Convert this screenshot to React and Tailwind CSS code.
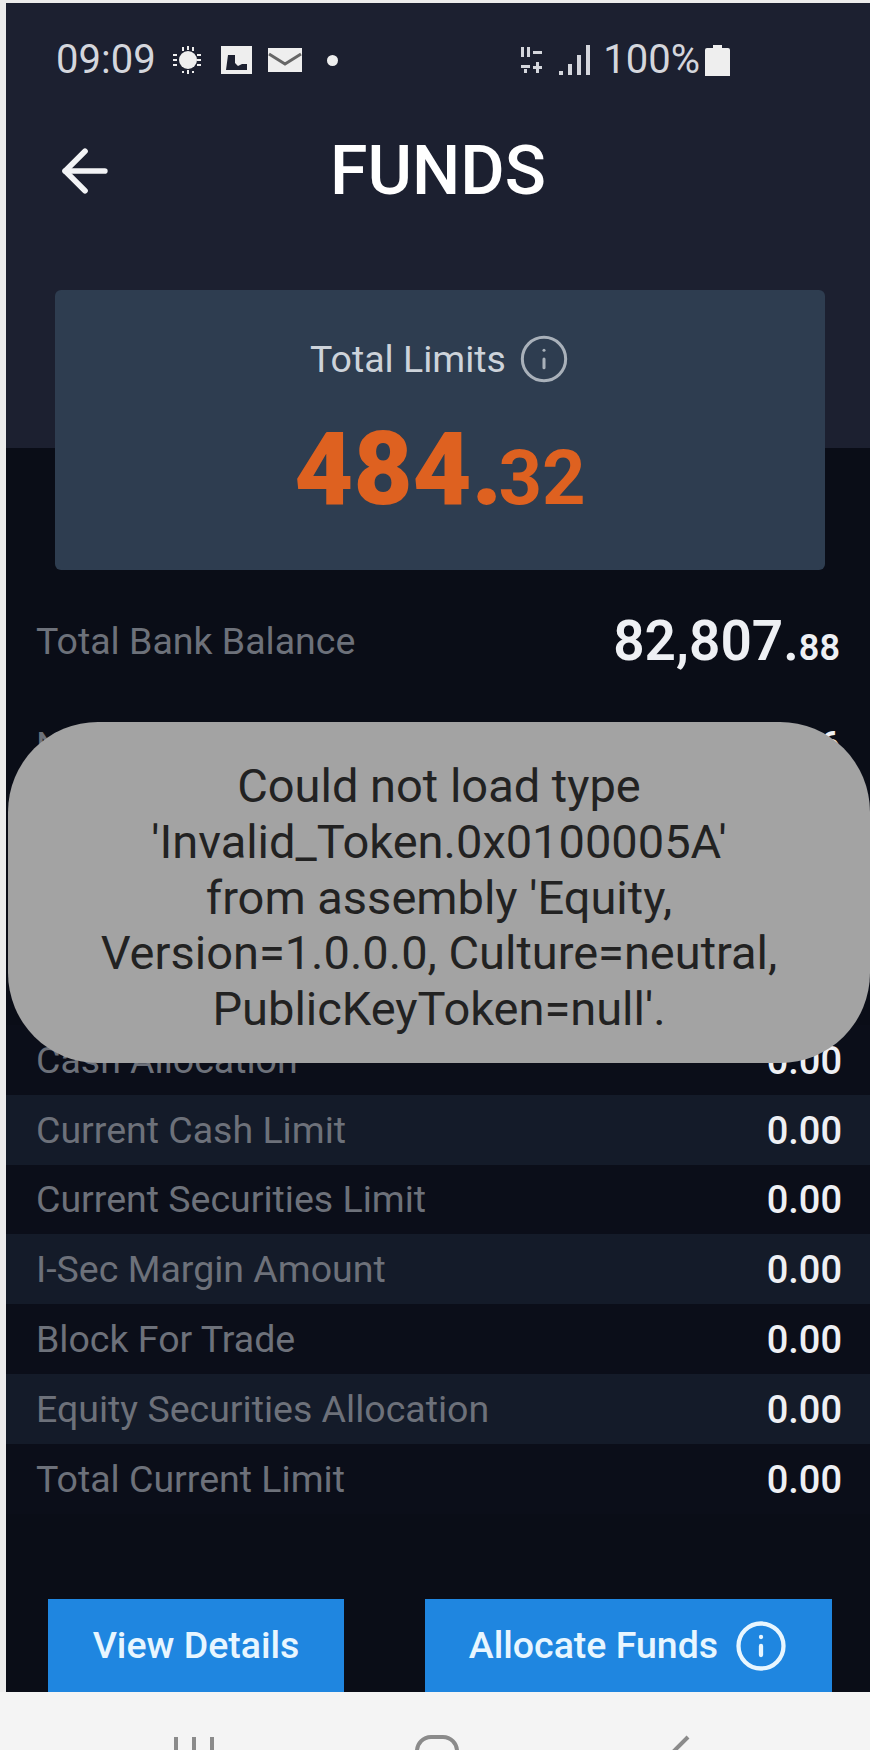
import React from 'react';
import { ArrowLeft, Info } from 'lucide-react';

const rows = [
  { label: 'Cash Allocation', value: '0.00', dark: true },
  { label: 'Current Cash Limit', value: '0.00', dark: false },
  { label: 'Current Securities Limit', value: '0.00', dark: true },
  { label: 'I-Sec Margin Amount', value: '0.00', dark: false },
  { label: 'Block For Trade', value: '0.00', dark: true },
  { label: 'Equity Securities Allocation', value: '0.00', dark: false },
  { label: 'Total Current Limit', value: '0.00', dark: true },
];

function StatusBar() {
  return (
    <div className="flex h-[60px] items-center justify-between pl-[50px] pr-[140px] text-[40px] leading-none text-[#d4d6dc]">
      <div className="flex items-center">
        <span>09:09</span>
        <svg className="ml-[16px]" width="32" height="28" viewBox="0 0 32 28" fill="#eee">
          <circle cx="16" cy="14" r="9" />
          <path d="M1 9h30M1 14h30M1 19h30M11 1v26M16 0v28M21 1v26" stroke="#eee" strokeWidth="2" strokeDasharray="4 20" />
        </svg>
        <svg className="ml-[17px]" width="31" height="28" viewBox="0 0 31 28">
          <rect width="31" height="28" fill="#eee" />
          <path d="M5 24h21v-6h-5l-4 2-3-3v-8H7z" fill="#1c2030" />
        </svg>
        <svg className="ml-[16px]" width="34" height="24" viewBox="0 0 34 24">
          <rect width="34" height="24" fill="#eee" />
          <path d="M1 6l16 10L33 6" stroke="#666" strokeWidth="3" fill="none" />
        </svg>
        <span className="ml-[25px] h-[11px] w-[11px] rounded-full bg-[#eee]" />
      </div>
      <div className="flex items-center">
        <svg width="23" height="28" viewBox="0 0 23 28" fill="#d4d6dc">
          <path d="M1 1h3v10H1zM7 1h3v10H7zM13 5h9v3h-9zM1 19h9v3H1zM13 20h9v3h-9zM16 16h3v11h-3zM4 23h3v4H4z" />
        </svg>
        <svg className="ml-[15px]" width="33" height="30" viewBox="0 0 33 30" fill="#d4d6dc">
          <path d="M1 26h4v4H1zM10 19h4v11h-4zM19 10h4v20h-4zM28 0h4v30h-4z" />
        </svg>
        <span className="ml-[12px]">100%</span>
        <svg className="ml-[5px]" width="25" height="31" viewBox="0 0 25 31" fill="#eee">
          <path d="M8 0h9v3h6a2 2 0 0 1 2 2v26H0V5a2 2 0 0 1 2-2h6z" />
        </svg>
      </div>
    </div>
  );
}

function Row({ label, value, dark }) {
  return (
    <div className={`flex h-[69.8px] items-center justify-between pl-[30px] pr-[28px] ${dark ? 'bg-[#0b0e19]' : 'bg-[#141b29]'}`}>
      <span className="text-[37.5px] text-[#6d717a]">{label}</span>
      <span className="pt-[3px] text-[38px] font-medium text-[#eef0f4]">{value}</span>
    </div>
  );
}

function NavBar() {
  return (
    <div className="flex h-[58px] shrink-0 items-start bg-[#f4f4f4] pt-[43px]">
      <svg className="ml-[174px]" width="42" height="32" viewBox="0 0 42 32" fill="#8b8b8b">
        <path d="M0 2h4v30H0zM18 2h4v30h-4zM36 2h4v30h-4z" />
      </svg>
      <svg className="ml-[199px]" width="44" height="32" viewBox="0 0 44 32" fill="none" stroke="#8b8b8b" strokeWidth="4">
        <rect x="2" y="2" width="40" height="50" rx="14" />
      </svg>
      <svg className="ml-[213px]" width="20" height="32" viewBox="0 0 20 32" fill="none" stroke="#8b8b8b" strokeWidth="4">
        <path d="M16 2L0 18" />
      </svg>
    </div>
  );
}

export default function App() {
  return (
    <div className="relative flex h-[1750px] w-[870px] flex-col overflow-hidden bg-[#ececec] pt-[3px] font-['Roboto',sans-serif]">
      <div className="flex h-[1689px] flex-col pl-[6px]">
        <div className="h-[445px] shrink-0 bg-[#1c2030] pt-[27px]">
          <StatusBar />
          <div className="relative mt-[41px] flex h-[80px] items-center justify-center">
            <ArrowLeft className="absolute left-[45px] top-[6px]" size={68} strokeWidth={2} color="#f2f3f5" />
            <h1 className="text-[68px] font-medium leading-none text-white">FUNDS</h1>
          </div>
        </div>
        <div className="flex min-h-0 flex-1 flex-col bg-[#0a0d17]">
          <div className="relative z-10 -mt-[158px] ml-[49px] flex h-[280px] w-[770px] shrink-0 flex-col items-center rounded-[6px] bg-[#2e3d50]">
            <div className="mt-[44px] flex h-[50px] items-center text-[37.5px] text-[#cdd3da]">
              Total Limits
              <Info className="ml-[12px]" size={52} strokeWidth={1.4} color="#a9b1ba" />
            </div>
            <div className="mt-[34px] font-black leading-none text-[#de6120]">
              <span className="text-[102px]">484.</span>
              <span className="-ml-[4px] text-[76px] font-bold">32</span>
            </div>
          </div>
          <div className="mt-[36px] flex h-[70px] shrink-0 items-center justify-between pl-[30px] pr-[30px]">
            <span className="text-[37.5px] text-[#6d717a]">Total Bank Balance</span>
            <span className="font-semibold text-[#eef0f4]">
              <span className="text-[55px]">82,807.</span>
              <span className="text-[36px]">88</span>
            </span>
          </div>
          <div className="mt-[34px] flex h-[70px] shrink-0 items-center justify-between pl-[30px] pr-[30px]">
            <span className="text-[37.5px] text-[#6d717a]">N</span>
            <span className="text-[36px] font-semibold text-[#eef0f4]">6</span>
          </div>
          <div className="mt-[245px]">
            {rows.map((row) => (
              <Row key={row.label} {...row} />
            ))}
          </div>
          <div className="mt-auto flex h-[93px] shrink-0 pl-[42px]">
            <button className="flex w-[296px] items-center justify-center bg-[#1f86e0] text-[37.5px] font-medium text-[#e8f6ff]">
              View Details
            </button>
            <button className="ml-[81px] flex w-[407px] items-center justify-center bg-[#1f86e0] text-[37.5px] font-medium text-[#e8f6ff]">
              Allocate Funds
              <Info className="ml-[16px]" size={54} strokeWidth={1.9} color="#e8f6ff" />
            </button>
          </div>
        </div>
      </div>
      <NavBar />
      {/* toast sits over the rows */}
      <div className="absolute left-[8px] top-[722px] z-20 flex h-[341px] w-[862px] flex-col items-center justify-center rounded-[90px] bg-[#a3a3a3] pt-[10px] text-center text-[47px] leading-[55.7px] text-[#222]">
        <p>Could not load type</p>
        <p>'Invalid_Token.0x0100005A'</p>
        <p>from assembly 'Equity,</p>
        <p>Version=1.0.0.0, Culture=neutral,</p>
        <p>PublicKeyToken=null'.</p>
      </div>
    </div>
  );
}
